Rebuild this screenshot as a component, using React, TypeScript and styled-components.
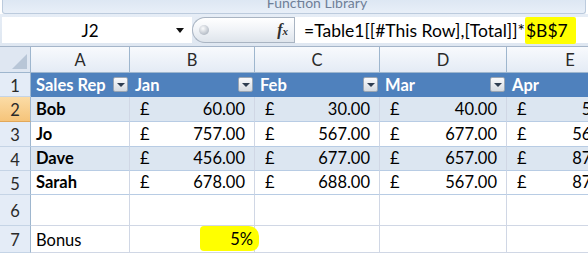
import styled, { createGlobalStyle } from "styled-components";

const GlobalStyle = createGlobalStyle`
  html, body { margin: 0; padding: 0; background: #fff; }
  body { font-family: Lato, "Open Sans", sans-serif; }
`;

const COLS = "31px 99px 125px 125px 127px 127px";

const months = ["Jan", "Feb", "Mar", "Apr"];
const letters = ["A", "B", "C", "D", "E"];

const reps = [
    { name: "Bob", values: ["60.00", "30.00", "40.00", "50.00"] },
    { name: "Jo", values: ["757.00", "567.00", "677.00", "567.00"] },
    { name: "Dave", values: ["456.00", "677.00", "657.00", "876.00"] },
    { name: "Sarah", values: ["678.00", "688.00", "567.00", "876.00"] },
];

const Frame = styled.div`
  width: 588px;
  height: 254px;
  overflow: hidden;
  background: #fff;
  color: #000;
`;

const Ribbon = styled.div`
  height: 13px;
  margin: 0 2px;
  overflow: hidden;
  background: linear-gradient(#dde7f3, #e8eff8);
  border: 1px solid #bccbdd;
  border-top: none;
  border-radius: 0 0 3px 3px;
`;

const RibbonLabel = styled.div`
  margin-top: -5px;
  padding-left: 46px;
  text-align: center;
  font-size: 14px;
  line-height: 16px;
  color: #6f7f98;
`;

const FormulaBar = styled.div`
  display: flex;
  align-items: stretch;
  height: 26px;
  padding: 3px 0 3px 2px;
  background: linear-gradient(#e6edf6, #dfe7f1);
  border-bottom: 1px solid #a5b5c9;
`;

const NameBox = styled.div`
  width: 190px;
  display: flex;
  align-items: center;
  background: #fff;
  font-size: 17px;
`;

const NameText = styled.span`
  flex: 1;
  text-align: center;
  padding-left: 2px;
`;

const Caret = styled.span`
  width: 0;
  height: 0;
  margin-right: 8px;
  border-left: 4px solid transparent;
  border-right: 4px solid transparent;
  border-top: 5px solid #111;
`;

const FxPill = styled.div`
  width: 102px;
  display: flex;
  align-items: center;
  box-sizing: border-box;
  background: linear-gradient(#ffffff, #f0f3f7 50%, #dfe5ec);
  border: 1px solid #a9b4c2;
  border-right: none;
  border-radius: 13px 0 0 13px;
`;

const Knob = styled.span`
  width: 10px;
  height: 10px;
  margin-left: 6px;
  border-radius: 50%;
  background: radial-gradient(circle at 40% 35%, #fbfcfd, #b7bec8 70%, #9aa3ae);
`;

const FxLabel = styled.span`
  margin-left: auto;
  margin-right: 6px;
  font-family: "Liberation Serif", serif;
  font-style: italic;
  font-weight: bold;
  font-size: 16px;
  color: #2e2e2e;
  small { font-size: 11px; }
`;

const FormulaInput = styled.div`
  flex: 1;
  display: flex;
  align-items: center;
  padding-left: 9px;
  background: #fff;
  border-left: 1px solid #a9b4c2;
  font-size: 17.5px;
  white-space: nowrap;
`;

const Marker = styled.span`
  background: #ffff00;
  padding: 3px 8px 3px 1px;
  border-radius: 2px;
`;

const Sheet = styled.div`
  display: flex;
  flex-direction: column;
  font-size: 16.5px;
`;

const SheetRow = styled.div<{ $h: number }>`
  display: grid;
  grid-template-columns: ${COLS};
  height: ${(p) => p.$h}px;
`;

const Corner = styled.div`
  position: relative;
  background: #dfe7f2;
  border-right: 1px solid #9eb6ce;
  border-bottom: 1px solid #9eb6ce;
  &::after {
    content: "";
    position: absolute;
    right: 3px;
    bottom: 3px;
    border-left: 15px solid transparent;
    border-bottom: 15px solid #b8c6d7;
  }
`;

const ColHead = styled.div`
  display: flex;
  align-items: center;
  justify-content: center;
  background: linear-gradient(#f8fafd, #e4ebf5);
  border-right: 1px solid #9eb6ce;
  border-bottom: 1px solid #9eb6ce;
  color: #2a2a2a;
`;

const RowHead = styled.div<{ $active?: boolean }>`
  display: flex;
  align-items: center;
  justify-content: center;
  background: ${(p) => (p.$active ? "linear-gradient(#fbdca6, #f6c47a)" : "#e4ecf7")};
  border-right: 1px solid #9eb6ce;
  border-bottom: 1px solid ${(p) => (p.$active ? "#e2a85a" : "#c5d4e6")};
  color: #2a2a2a;
  padding-top: 2px;
`;

const TableHead = styled.div`
  display: flex;
  align-items: center;
  padding: 0 2px 0 5px;
  background: #4f81bd;
  color: #fff;
  font-weight: bold;
  border-bottom: 1px solid #4f81bd;
`;

const DropBtn = styled.span`
  margin-left: auto;
  width: 15px;
  height: 15px;
  box-sizing: border-box;
  display: flex;
  align-items: center;
  justify-content: center;
  background: linear-gradient(#fbfbfc, #d5dae1);
  border: 1px solid #9aa5b3;
  border-radius: 2px;
  &::after {
    content: "";
    border-left: 4px solid transparent;
    border-right: 4px solid transparent;
    border-top: 4px solid #2f3d50;
  }
`;

const Cell = styled.div<{ $band?: boolean; $bold?: boolean }>`
  display: flex;
  align-items: flex-end;
  padding: 0 9px 2px 5px;
  background: ${(p) => (p.$band ? "#dce6f1" : "#fff")};
  border-right: 1px solid #d0d7e5;
  border-bottom: 1px solid ${(p) => (p.$band !== undefined ? "#b8cce4" : "#d0d7e5")};
  font-weight: ${(p) => (p.$bold ? "bold" : "normal")};
  white-space: nowrap;
  overflow: hidden;
`;

const Money = styled(Cell)`
  justify-content: space-between;
  padding-left: 10px;
`;

const RightCell = styled(Cell)`
  justify-content: flex-end;
  padding-right: 3px;
  overflow: visible;
  position: relative;
  z-index: 1;
`;

const Highlight = styled.span`
  background: #ffff00;
  padding: 3px 6px 2px 30px;
  margin-right: -8px;
  margin-bottom: -1px;
  border-radius: 4px 10px 8px 4px;
`;

export default function App() {
    return (
        <Frame>
            <GlobalStyle />
            <Ribbon>
                <RibbonLabel>Function Library</RibbonLabel>
            </Ribbon>
            <FormulaBar>
                <NameBox>
                    <NameText>J2</NameText>
                    <Caret />
                </NameBox>
                <FxPill>
                    <Knob />
                    <FxLabel>f<small>x</small></FxLabel>
                </FxPill>
                <FormulaInput>
                    =Table1[[#This Row],[Total]]*<Marker>$B$7</Marker>
                </FormulaInput>
            </FormulaBar>
            <Sheet>
                <SheetRow $h={26}>
                    <Corner />
                    {letters.map((l) => <ColHead key={l}>{l}</ColHead>)}
                </SheetRow>
                <SheetRow $h={24}>
                    <RowHead>1</RowHead>
                    <TableHead>Sales Rep<DropBtn /></TableHead>
                    {months.map((m) => (
                        <TableHead key={m}>{m}<DropBtn /></TableHead>
                    ))}
                </SheetRow>
                {reps.map((r, i) => (
                    <SheetRow key={r.name} $h={i < 2 ? 25 : 24}>
                        <RowHead $active={i === 0}>{i + 2}</RowHead>
                        <Cell $band={i % 2 === 0} $bold>{r.name}</Cell>
                        {r.values.map((v, j) => (
                            <Money key={j} $band={i % 2 === 0}>
                                <span>£</span>
                                <span>{v}</span>
                            </Money>
                        ))}
                    </SheetRow>
                ))}
                <SheetRow $h={31}>
                    <RowHead>6</RowHead>
                    <Cell />
                    <Cell />
                    <Cell />
                    <Cell />
                    <Cell />
                </SheetRow>
                <SheetRow $h={24}>
                    <RowHead>7</RowHead>
                    <Cell>Bonus</Cell>
                    <RightCell><Highlight>5%</Highlight></RightCell>
                    <Cell />
                    <Cell />
                    <Cell />
                </SheetRow>
            </Sheet>
        </Frame>
    );
}
